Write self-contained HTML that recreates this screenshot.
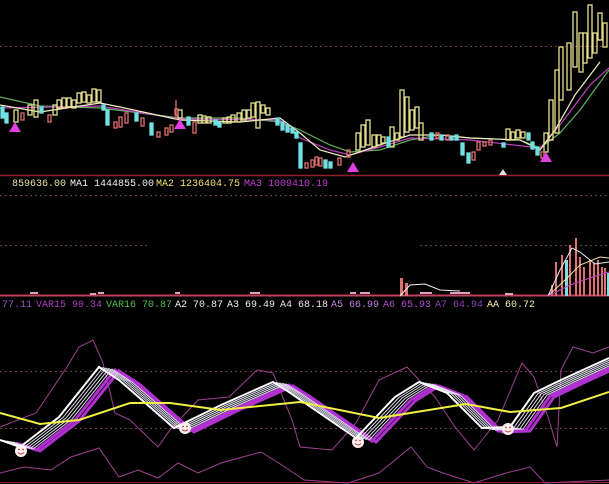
<!DOCTYPE html>
<html><head><meta charset="utf-8"><style>
html,body{margin:0;padding:0;background:#000;width:609px;height:484px;overflow:hidden}
.t{position:absolute;font-family:"Liberation Mono",monospace;font-size:10px;line-height:12px;white-space:pre}
</style></head><body>
<svg width="609" height="484" style="position:absolute;left:0;top:0" xmlns="http://www.w3.org/2000/svg">
<defs><polyline id="w" points="0,440 20,447 59,417 99,367 119,380 174,428 221,405 273,382 289,392 356,438 395,397 419,382 447,393 482,428 510,427 534,393 561,380 609,358"/></defs>
<g stroke="#704040" stroke-dasharray="2,3" stroke-width="1">
<line x1="0" y1="46.5" x2="609" y2="46.5"/>
<line x1="0" y1="195.5" x2="609" y2="195.5"/>
<line x1="0" y1="245.5" x2="150" y2="245.5"/><line x1="420" y1="245.5" x2="609" y2="245.5"/>
<line x1="0" y1="371.5" x2="609" y2="371.5"/>
<line x1="0" y1="428.5" x2="609" y2="428.5"/>
</g>
<line x1="0" y1="175.5" x2="609" y2="175.5" stroke="#902030" stroke-width="1.5"/>
<line x1="0" y1="482.5" x2="609" y2="482.5" stroke="#902030"/>
<g fill="none" stroke-width="1.2">
<polyline stroke="#60b060" points="0,97 40,106 100,108 140,113 180,118 240,118 280,122 300,130 330,145 350,152 380,150 410,140 440,135 470,138 520,140 540,148 560,133 580,110 609,70"/>
<polyline stroke="#c040c0" points="0,108 100,106 180,119 280,120 300,138 330,150 350,155 380,147 410,138 470,140 540,148 560,125 590,85 609,68"/>
<polyline stroke="#f0f0c0" points="0,105 40,112 100,103 120,107 180,120 240,122 280,118 300,133 320,150 345,157 380,145 410,135 440,135 470,138 520,140 540,150 555,130 575,95 600,62"/>
</g>
<g stroke-width="1.3">
<g fill="none" stroke="#e8e090">
<rect x="14" y="110" width="4" height="12"/><rect x="28" y="105" width="4" height="10"/><rect x="34" y="100" width="4" height="17"/>
<rect x="53" y="105" width="4" height="10"/><rect x="57" y="100" width="4" height="8"/><rect x="62" y="98" width="4" height="10"/><rect x="67" y="98" width="4" height="9"/><rect x="72" y="100" width="4" height="8"/><rect x="77" y="93" width="4" height="10"/><rect x="82" y="92" width="4" height="10"/><rect x="87" y="95" width="4" height="8"/><rect x="92" y="89" width="4" height="13"/><rect x="97" y="90" width="4" height="12"/>
<rect x="178" y="110" width="4" height="8"/><rect x="198" y="115" width="4" height="8"/><rect x="202" y="116" width="4" height="7"/><rect x="207" y="117" width="4" height="6"/><rect x="223" y="118" width="4" height="5"/><rect x="227" y="117" width="4" height="6"/><rect x="231" y="115" width="4" height="7"/><rect x="237" y="113" width="4" height="9"/><rect x="242" y="110" width="4" height="10"/><rect x="247" y="110" width="4" height="8"/><rect x="251" y="103" width="4" height="14"/><rect x="256" y="102" width="4" height="26"/><rect x="261" y="105" width="4" height="8"/><rect x="266" y="108" width="4" height="7"/>
<rect x="356" y="133" width="4" height="17"/><rect x="361" y="125" width="4" height="22"/><rect x="366" y="120" width="4" height="25"/><rect x="372" y="135" width="4" height="12"/><rect x="377" y="135" width="4" height="10"/><rect x="381" y="137" width="4" height="6"/><rect x="390" y="127" width="4" height="20"/><rect x="395" y="133" width="4" height="7"/><rect x="400" y="90" width="4" height="47"/><rect x="405" y="97" width="4" height="35"/><rect x="410" y="110" width="4" height="20"/><rect x="415" y="107" width="4" height="21"/><rect x="419" y="123" width="4" height="17"/>
<rect x="506" y="129" width="4" height="11"/><rect x="511" y="132" width="4" height="8"/><rect x="516" y="130" width="4" height="8"/><rect x="521" y="132" width="4" height="6"/>
<rect x="544" y="133" width="4" height="19"/><rect x="549" y="100" width="4" height="40"/><rect x="555" y="70" width="4" height="63"/><rect x="559" y="47" width="4" height="53"/><rect x="567" y="43" width="4" height="47"/><rect x="573" y="12" width="4" height="55"/><rect x="579" y="33" width="4" height="39"/><rect x="583" y="33" width="4" height="30"/><rect x="588" y="5" width="4" height="53"/><rect x="593" y="33" width="4" height="20"/><rect x="598" y="13" width="4" height="27"/><rect x="603" y="23" width="4" height="24"/>
</g>
<g fill="#70e0e0" stroke="#70e0e0">
<rect x="1" y="107" width="3" height="11"/><rect x="5" y="113" width="3" height="10"/><rect x="40" y="107" width="3" height="6"/><rect x="102" y="105" width="3" height="5"/><rect x="106" y="110" width="3" height="15"/><rect x="135" y="113" width="3" height="8"/><rect x="150" y="123" width="3" height="12"/><rect x="187" y="117" width="3" height="8"/><rect x="214" y="120" width="3" height="5"/><rect x="218" y="122" width="3" height="5"/><rect x="276" y="118" width="3" height="7"/><rect x="281" y="122" width="3" height="8"/><rect x="286" y="125" width="3" height="7"/><rect x="291" y="128" width="3" height="5"/><rect x="295" y="132" width="3" height="6"/><rect x="299" y="143" width="3" height="25"/><rect x="324" y="160" width="3" height="8"/><rect x="329" y="162" width="3" height="6"/><rect x="387" y="137" width="3" height="10"/><rect x="430" y="133" width="3" height="7"/><rect x="440" y="135" width="3" height="5"/><rect x="450" y="136" width="3" height="4"/><rect x="455" y="135" width="3" height="5"/><rect x="461" y="143" width="3" height="12"/><rect x="467" y="153" width="3" height="10"/><rect x="502" y="143" width="3" height="4"/><rect x="527" y="133" width="3" height="7"/><rect x="531" y="142" width="3" height="7"/><rect x="536" y="147" width="3" height="8"/>
</g>
<g fill="none" stroke="#e07070">
<rect x="21" y="113" width="3" height="7"/><rect x="48" y="115" width="3" height="7"/><rect x="114" y="122" width="3" height="6"/><rect x="119" y="117" width="3" height="10"/><rect x="125" y="113" width="3" height="10"/><rect x="141" y="118" width="3" height="8"/><rect x="157" y="132" width="3" height="5"/><rect x="165" y="128" width="3" height="7"/><rect x="170" y="125" width="3" height="7"/><rect x="175" y="109" width="3" height="6"/><rect x="193" y="122" width="3" height="11"/><rect x="305" y="163" width="3" height="5"/><rect x="311" y="160" width="3" height="7"/><rect x="315" y="157" width="3" height="8"/><rect x="319" y="158" width="3" height="8"/><rect x="338" y="158" width="3" height="7"/><rect x="347" y="150" width="3" height="7"/><rect x="436" y="133" width="3" height="5"/><rect x="446" y="135" width="3" height="5"/><rect x="472" y="152" width="3" height="8"/><rect x="477" y="142" width="3" height="8"/><rect x="483" y="142" width="3" height="4"/><rect x="489" y="140" width="3" height="5"/><rect x="541" y="152" width="3" height="6"/>
</g>
<line x1="176" y1="100" x2="176" y2="120" stroke="#e07070"/>
</g>
<g fill="#e040e0">
<polygon points="15,122 9,132 21,132"/><polygon points="180,119 174,129 186,129"/><polygon points="353,162 347,172 359,172"/><polygon points="546,152 540,162 552,162"/>
</g>
<polygon points="503,169 499,175 507,175" fill="#e0e0e0"/>
<line x1="0" y1="295.5" x2="609" y2="295.5" stroke="#c04060" stroke-width="2"/>
<g fill="#e0a0c0">
<rect x="30" y="292" width="8" height="2"/><rect x="90" y="293" width="6" height="2"/><rect x="98" y="292" width="6" height="2"/><rect x="175" y="292" width="5" height="2"/><rect x="250" y="292" width="10" height="2"/><rect x="350" y="292" width="6" height="2"/><rect x="360" y="292" width="10" height="2"/><rect x="420" y="292" width="12" height="2"/><rect x="450" y="292" width="20" height="2"/><rect x="505" y="293" width="8" height="2"/>
</g>
<g fill="#e07070">
<rect x="551" y="285" width="2" height="11"/><rect x="555" y="262" width="2" height="34"/><rect x="561" y="255" width="2" height="41"/><rect x="569" y="245" width="2" height="51"/><rect x="575" y="238" width="2" height="58"/><rect x="579" y="257" width="2" height="39"/><rect x="583" y="267" width="2" height="29"/><rect x="589" y="260" width="2" height="36"/><rect x="593" y="263" width="2" height="33"/><rect x="597" y="260" width="2" height="36"/><rect x="601" y="267" width="2" height="29"/><rect x="604" y="268" width="2" height="28"/><rect x="400" y="278" width="3" height="18"/><rect x="405" y="283" width="3" height="13"/>
</g>
<g fill="#80e0e0"><rect x="565" y="260" width="3" height="36"/><rect x="607" y="273" width="2" height="23"/></g>
<g fill="none" stroke-width="1">
<polyline stroke="#f0f0f0" points="548,296 560,270 572,248 580,252 595,264 609,262"/>
<polyline stroke="#f0e0a0" points="548,296 565,280 580,265 600,257 609,258"/>
<polyline stroke="#c040c0" points="548,296 570,285 590,278 609,272"/>
<polyline stroke="#f0f0f0" points="400,296 410,285 425,284 440,290 460,291"/>
</g>
<g fill="none">
<polyline stroke="#a04090" stroke-width="1" points="0,427 36,413 67,367 79,347 93,340 103,363 115,413 130,420 158,447 170,430 198,400 229,397 257,370 273,373 292,420 300,447 332,450 356,423 379,380 407,367 435,397 455,427 474,450 498,420 522,363 534,377 549,420 557,447 561,370 573,347 593,353 609,347"/>
<polyline stroke="#a04090" stroke-width="1" points="0,473 24,467 51,470 71,457 99,448 119,477 138,470 158,478 178,463 198,473 221,463 261,452 285,467 304,480 348,483 379,473 411,447 427,467 443,473 474,483 506,473 530,467 545,483 609,480"/>
<g stroke="#b030d0" stroke-width="3">
<use href="#w" transform="translate(20,4)"/>
<use href="#w" transform="translate(16,3)"/>
</g>
<g stroke="#e0e0f0" stroke-width="1">
<use href="#w" transform="translate(13,2)"/>
<use href="#w" transform="translate(10,1.5)"/>
<use href="#w" transform="translate(7,1)"/>
<use href="#w" transform="translate(4,0.5)"/>
</g>
<use href="#w" stroke="#ffffff" stroke-width="2"/>
<polyline stroke="#f0f040" stroke-width="2" points="0,413 40,424 79,420 130,403 170,403 221,410 300,402 379,418 466,404 510,412 561,408 609,392"/>
</g>
<g>
<g transform="translate(21,451)"><circle r="6" fill="#fff0f0"/><circle cx="-2" cy="-1.5" r="0.9" fill="#c04040"/><circle cx="2" cy="-1.5" r="0.9" fill="#c04040"/><path d="M-3,1.5 Q0,4.5 3,1.5" stroke="#c04040" fill="none"/></g>
<g transform="translate(185,428)"><circle r="6" fill="#fff0f0"/><circle cx="-2" cy="-1.5" r="0.9" fill="#c04040"/><circle cx="2" cy="-1.5" r="0.9" fill="#c04040"/><path d="M-3,1.5 Q0,4.5 3,1.5" stroke="#c04040" fill="none"/></g>
<g transform="translate(358,442)"><circle r="6" fill="#fff0f0"/><circle cx="-2" cy="-1.5" r="0.9" fill="#c04040"/><circle cx="2" cy="-1.5" r="0.9" fill="#c04040"/><path d="M-3,1.5 Q0,4.5 3,1.5" stroke="#c04040" fill="none"/></g>
<g transform="translate(508,429)"><circle r="6" fill="#fff0f0"/><circle cx="-2" cy="-1.5" r="0.9" fill="#c04040"/><circle cx="2" cy="-1.5" r="0.9" fill="#c04040"/><path d="M-3,1.5 Q0,4.5 3,1.5" stroke="#c04040" fill="none"/></g>
</g>
</svg>
<div class="t" style="left:12px;top:179px;color:#e8e0a0">859636.00</div>
<div class="t" style="left:70px;top:179px;color:#f0f0f0">MA1 1444855.00</div>
<div class="t" style="left:156px;top:179px;color:#f0e070">MA2 1236404.75</div>
<div class="t" style="left:244px;top:179px;color:#c040d0">MA3 1009410.19</div>
<div class="t" style="left:2px;top:300px;color:#9060c0">77.11</div>
<div class="t" style="left:36px;top:300px;color:#b040c0">VAR15 90.34</div>
<div class="t" style="left:106px;top:300px;color:#50c050">VAR16 70.87</div>
<div class="t" style="left:175px;top:300px;color:#f0f0f0">A2 70.87</div>
<div class="t" style="left:227px;top:300px;color:#f0f0f0">A3 69.49</div>
<div class="t" style="left:280px;top:300px;color:#f0e0f0">A4 68.18</div>
<div class="t" style="left:331px;top:300px;color:#c080e0">A5 66.99</div>
<div class="t" style="left:383px;top:300px;color:#b050d0">A6 65.93</div>
<div class="t" style="left:435px;top:300px;color:#9040c0">A7 64.94</div>
<div class="t" style="left:487px;top:300px;color:#f0f0b0">AA 60.72</div>
</body></html>
